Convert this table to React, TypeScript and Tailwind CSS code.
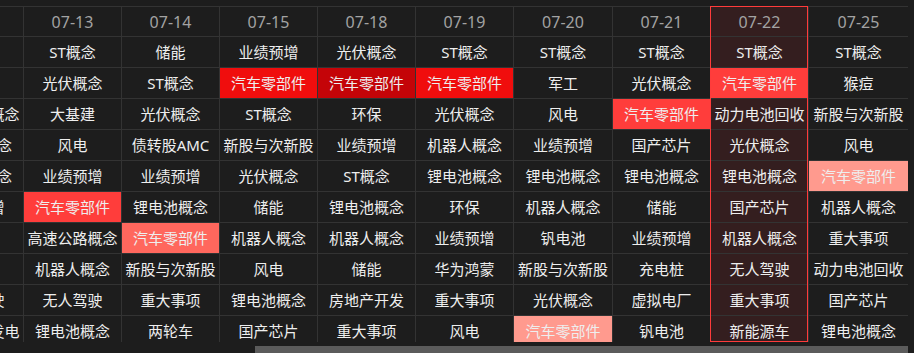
import { useLayoutEffect, useRef } from "react";

type Cell = { t: string; c?: string };
type Col = { date: string; w: string; cells: Cell[]; active?: boolean };

const RED = "bg-[#f00d0d]";
const DARK = "bg-[#c40408]";
const HOT = "bg-[#ff3d3b]";
const SALMON = "bg-[#ff675d]";
const PINK = "bg-[#ff9a8e]";

const cols: Col[] = [
  {
    date: "07-12",
    w: "w-[98px]",
    cells: [
      { t: "ST概念" },
      { t: "储能" },
      { t: "数字货币概念" },
      { t: "锂电池概念" },
      { t: "机器人概念" },
      { t: "业绩预增" },
      { t: "军工" },
      { t: "风电" },
      { t: "无人驾驶" },
      { t: "绿色电力发电" },
    ],
  },
  {
    date: "07-13",
    w: "w-[98px]",
    cells: [
      { t: "ST概念" },
      { t: "光伏概念" },
      { t: "大基建" },
      { t: "风电" },
      { t: "业绩预增" },
      { t: "汽车零部件", c: HOT },
      { t: "高速公路概念" },
      { t: "机器人概念" },
      { t: "无人驾驶" },
      { t: "锂电池概念" },
    ],
  },
  {
    date: "07-14",
    w: "w-[98px]",
    cells: [
      { t: "储能" },
      { t: "ST概念" },
      { t: "光伏概念" },
      { t: "债转股AMC" },
      { t: "业绩预增" },
      { t: "锂电池概念" },
      { t: "汽车零部件", c: SALMON },
      { t: "新股与次新股" },
      { t: "重大事项" },
      { t: "两轮车" },
    ],
  },
  {
    date: "07-15",
    w: "w-[98px]",
    cells: [
      { t: "业绩预增" },
      { t: "汽车零部件", c: RED },
      { t: "ST概念" },
      { t: "新股与次新股" },
      { t: "光伏概念" },
      { t: "储能" },
      { t: "机器人概念" },
      { t: "风电" },
      { t: "锂电池概念" },
      { t: "国产芯片" },
    ],
  },
  {
    date: "07-18",
    w: "w-[98px]",
    cells: [
      { t: "光伏概念" },
      { t: "汽车零部件", c: DARK },
      { t: "环保" },
      { t: "业绩预增" },
      { t: "ST概念" },
      { t: "锂电池概念" },
      { t: "机器人概念" },
      { t: "储能" },
      { t: "房地产开发" },
      { t: "重大事项" },
    ],
  },
  {
    date: "07-19",
    w: "w-[98px]",
    cells: [
      { t: "ST概念" },
      { t: "汽车零部件", c: RED },
      { t: "光伏概念" },
      { t: "机器人概念" },
      { t: "锂电池概念" },
      { t: "环保" },
      { t: "业绩预增" },
      { t: "华为鸿蒙" },
      { t: "重大事项" },
      { t: "风电" },
    ],
  },
  {
    date: "07-20",
    w: "w-[99px]",
    cells: [
      { t: "ST概念" },
      { t: "军工" },
      { t: "风电" },
      { t: "业绩预增" },
      { t: "锂电池概念" },
      { t: "机器人概念" },
      { t: "钒电池" },
      { t: "新股与次新股" },
      { t: "光伏概念" },
      { t: "汽车零部件", c: PINK },
    ],
  },
  {
    date: "07-21",
    w: "w-[98px]",
    cells: [
      { t: "ST概念" },
      { t: "光伏概念" },
      { t: "汽车零部件", c: HOT },
      { t: "国产芯片" },
      { t: "锂电池概念" },
      { t: "储能" },
      { t: "业绩预增" },
      { t: "充电桩" },
      { t: "虚拟电厂" },
      { t: "钒电池" },
    ],
  },
  {
    date: "07-22",
    w: "w-[98px]",
    active: true,
    cells: [
      { t: "ST概念" },
      { t: "汽车零部件", c: HOT },
      { t: "动力电池回收" },
      { t: "光伏概念" },
      { t: "锂电池概念" },
      { t: "国产芯片" },
      { t: "机器人概念" },
      { t: "无人驾驶" },
      { t: "重大事项" },
      { t: "新能源车" },
    ],
  },
  {
    date: "07-25",
    w: "w-[100px]",
    cells: [
      { t: "ST概念" },
      { t: "猴痘" },
      { t: "新股与次新股" },
      { t: "风电" },
      { t: "汽车零部件", c: PINK },
      { t: "机器人概念" },
      { t: "重大事项" },
      { t: "动力电池回收" },
      { t: "国产芯片" },
      { t: "锂电池概念" },
    ],
  },
];

const HotConcepts = () => {
  const scroller = useRef<HTMLDivElement>(null);

  useLayoutEffect(() => {
    // table is scrolled to the latest days
    if (scroller.current) scroller.current.scrollLeft = 74;
  }, []);

  return (
    <div className="w-[914px] h-[353px] bg-[#1d1d1d] overflow-hidden font-['Noto_Sans','Noto_Sans_CJK_SC',sans-serif]">
      <div ref={scroller} className="w-[908px] overflow-hidden pt-[6px]">
        <div className="flex w-max h-[336px] overflow-hidden">
          {cols.map((col) => (
            <div
              key={col.date}
              className={`relative flex flex-col shrink-0 ${col.w} ${
                col.active ? "bg-[#341e1f]" : ""
              }`}
            >
              <div className="flex h-[31px] shrink-0 items-center justify-center border-t border-r border-b border-[#333] text-[16px] text-[#a3a3a3]">
                {col.date}
              </div>
              {col.cells.map((cell, i) => (
                <div
                  key={i}
                  className={`flex h-[31px] shrink-0 items-center justify-center whitespace-nowrap border-r border-b border-[#333] text-[15px] text-[#eeeeee] ${
                    cell.c ?? ""
                  }`}
                >
                  {cell.t}
                </div>
              ))}
              {col.active && (
                <div className="pointer-events-none absolute inset-y-0 -left-px right-px border border-[#ff3b3b]" />
              )}
            </div>
          ))}
        </div>
      </div>
      <div className="mt-[4px] h-[7px]">
        <div className="ml-[255px] w-[653px] h-full bg-[#5b5b5b]" />
      </div>
    </div>
  );
};

export default HotConcepts;
